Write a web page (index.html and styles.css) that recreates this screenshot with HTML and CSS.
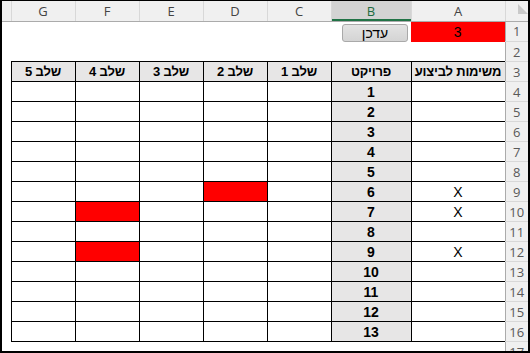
FILE: index.html
```html
<!DOCTYPE html>
<html lang="he">
<head>
    <meta charset="UTF-8">
    <title>Sheet1</title>
    <link rel="stylesheet" href="styles.css">
</head>
<body>
<div class="sheet">
    <table class="grid" dir="rtl">
        <colgroup>
            <col class="w-hdr">
            <col class="w-a">
            <col class="w-b">
            <col class="w-c"><col class="w-c"><col class="w-c"><col class="w-c"><col class="w-c">
            <col class="w-pad">
        </colgroup>
        <thead>
        <tr class="letters">
            <th class="corner"><span class="tri"></span></th>
            <th>A</th>
            <th class="picked">B</th>
            <th>C</th>
            <th>D</th>
            <th>E</th>
            <th>F</th>
            <th>G</th>
            <th class="pad"></th>
        </tr>
        </thead>
        <tbody>
        <tr>
            <td class="row-hdr">1</td>
            <td class="hot">3</td>
            <td class="btn-cell"><button class="update-btn" type="button">עדכן</button></td>
            <td></td><td></td><td></td><td></td><td></td><td></td>
        </tr>
        <tr>
            <td class="row-hdr">2</td>
            <td></td><td></td><td></td><td></td><td></td><td></td><td></td><td></td>
        </tr>
        <tr class="t-head">
            <td class="row-hdr">3</td>
            <td class="t first">משימות לביצוע</td>
            <td class="t">פרויקט</td>
            <td class="t">שלב 1</td>
            <td class="t">שלב 2</td>
            <td class="t">שלב 3</td>
            <td class="t">שלב 4</td>
            <td class="t">שלב 5</td>
            <td></td>
        </tr>
        <tr>
            <td class="row-hdr">4</td>
            <td class="t first"></td><td class="t proj">1</td>
            <td class="t"></td><td class="t"></td><td class="t"></td><td class="t"></td><td class="t"></td><td></td>
        </tr>
        <tr>
            <td class="row-hdr">5</td>
            <td class="t first"></td><td class="t proj">2</td>
            <td class="t"></td><td class="t"></td><td class="t"></td><td class="t"></td><td class="t"></td><td></td>
        </tr>
        <tr>
            <td class="row-hdr">6</td>
            <td class="t first"></td><td class="t proj">3</td>
            <td class="t"></td><td class="t"></td><td class="t"></td><td class="t"></td><td class="t"></td><td></td>
        </tr>
        <tr>
            <td class="row-hdr">7</td>
            <td class="t first"></td><td class="t proj">4</td>
            <td class="t"></td><td class="t"></td><td class="t"></td><td class="t"></td><td class="t"></td><td></td>
        </tr>
        <tr>
            <td class="row-hdr">8</td>
            <td class="t first"></td><td class="t proj">5</td>
            <td class="t"></td><td class="t"></td><td class="t"></td><td class="t"></td><td class="t"></td><td></td>
        </tr>
        <tr>
            <td class="row-hdr">9</td>
            <td class="t first">X</td><td class="t proj">6</td>
            <td class="t"></td><td class="t hot"></td><td class="t"></td><td class="t"></td><td class="t"></td><td></td>
        </tr>
        <tr>
            <td class="row-hdr">10</td>
            <td class="t first">X</td><td class="t proj">7</td>
            <td class="t"></td><td class="t"></td><td class="t"></td><td class="t hot"></td><td class="t"></td><td></td>
        </tr>
        <tr>
            <td class="row-hdr">11</td>
            <td class="t first"></td><td class="t proj">8</td>
            <td class="t"></td><td class="t"></td><td class="t"></td><td class="t"></td><td class="t"></td><td></td>
        </tr>
        <tr>
            <td class="row-hdr">12</td>
            <td class="t first">X</td><td class="t proj">9</td>
            <td class="t"></td><td class="t"></td><td class="t"></td><td class="t hot"></td><td class="t"></td><td></td>
        </tr>
        <tr>
            <td class="row-hdr">13</td>
            <td class="t first"></td><td class="t proj">10</td>
            <td class="t"></td><td class="t"></td><td class="t"></td><td class="t"></td><td class="t"></td><td></td>
        </tr>
        <tr>
            <td class="row-hdr">14</td>
            <td class="t first"></td><td class="t proj">11</td>
            <td class="t"></td><td class="t"></td><td class="t"></td><td class="t"></td><td class="t"></td><td></td>
        </tr>
        <tr>
            <td class="row-hdr">15</td>
            <td class="t first"></td><td class="t proj">12</td>
            <td class="t"></td><td class="t"></td><td class="t"></td><td class="t"></td><td class="t"></td><td></td>
        </tr>
        <tr>
            <td class="row-hdr">16</td>
            <td class="t first"></td><td class="t proj">13</td>
            <td class="t"></td><td class="t"></td><td class="t"></td><td class="t"></td><td class="t"></td><td></td>
        </tr>
        <tr>
            <td class="row-hdr">17</td>
            <td></td><td></td><td></td><td></td><td></td><td></td><td></td><td></td>
        </tr>
        </tbody>
    </table>
</div>
</body>
</html>
```

FILE: styles.css
```css
* {
    box-sizing: border-box;
}
body {
    margin: 0;
    background: #fff;
}
.sheet {
    width: 530px;
    height: 353px;
    border: 2px solid #000;
    border-top-width: 1px;
    overflow: hidden;
    background: #fff;
}
.grid {
    border-collapse: collapse;
    table-layout: fixed;
    width: 526px;
    font-family: "Liberation Sans", "DejaVu Sans", sans-serif;
    font-size: 14px;
    color: #000;
}
.w-hdr { width: 23px; }
.w-a { width: 94px; }
.w-b { width: 80px; }
.w-c { width: 64px; }
.w-pad { width: 9px; }

.grid td, .grid th {
    height: 20px;
    padding: 0;
    text-align: center;
    vertical-align: middle;
    white-space: nowrap;
    overflow: hidden;
}

/* column letters */
.letters th {
    height: 20px;
    background: #f0f0f0;
    border-left: 1px solid #d8d8d8;
    border-bottom: 1px solid #ababab;
    font-family: "Open Sans", "Liberation Sans", sans-serif;
    font-weight: normal;
    font-size: 13px;
    color: #444;
}
.letters th.picked {
    background: #d3d3d3;
    color: #1e6b40;
    box-shadow: inset 0 -2px 0 #217346;
}
.letters th.pad {
    border-left: none;
}
.corner {
    text-align: left;
    vertical-align: bottom;
}
.tri {
    display: block;
    width: 0;
    height: 0;
    margin: 0 0 3px 3px;
    border-bottom: 10px solid #c9c9c9;
    border-right: 10px solid transparent;
}

/* row numbers */
.row-hdr {
    background: #f0f0f0;
    border-bottom: 1px solid #d8d8d8;
    border-left: 1px solid #ababab;
    font-family: "Open Sans", "Liberation Sans", sans-serif;
    font-size: 13px;
    color: #595959;
}

/* table cells */
.t {
    border: 1px solid #000;
}
.t.first {
    border-right: none;
}
.t-head .t {
    background: #e7e6e6;
    font-weight: bold;
    font-size: 13px;
    letter-spacing: -0.2px;
}
.proj {
    background: #e7e6e6;
    font-weight: bold;
}
.hot {
    background: #ff0000;
}

.btn-cell {
    text-align: right;
}
.update-btn {
    display: block;
    width: 66px;
    height: 18px;
    margin: 2px 3px 0 0;
    padding: 0;
    border: 1px solid #a9a9a9;
    border-radius: 3px;
    background: linear-gradient(#e3e3e3, #d4d4d4);
    font-family: "Liberation Sans", "DejaVu Sans", sans-serif;
    font-size: 14px;
    color: #000;
}
```
